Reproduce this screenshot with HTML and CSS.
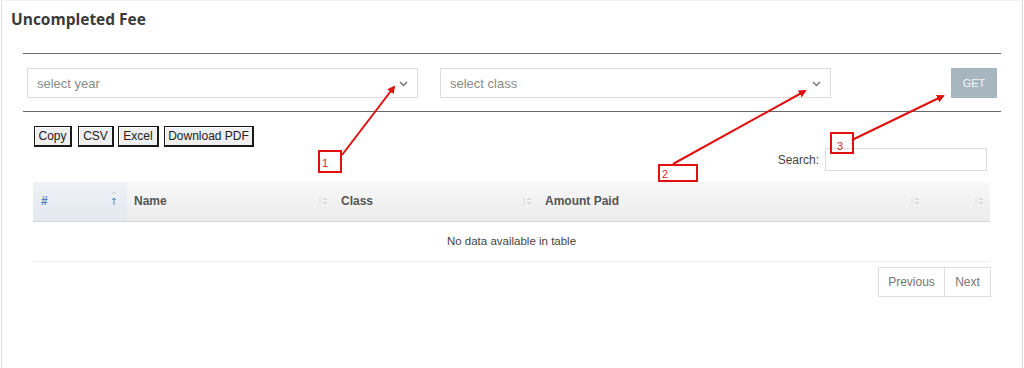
FILE: index.html
```html
<!DOCTYPE html>
<html>
<head>
<meta charset="utf-8">
<link rel="stylesheet" href="styles.css">
</head>
<body>
<div class="page">
  <div class="card">
    <h1 class="title">Uncompleted Fee</h1>
    <div class="content">
      <hr class="rule">
      <div class="filters">
        <div class="select sel-year"><span>select year</span>
          <svg class="chev" width="9" height="6" viewBox="0 0 9 6"><path d="M1 1 L4.5 4.5 L8 1" fill="none" stroke="#777" stroke-width="1.5"/></svg>
        </div>
        <div class="select sel-class"><span>select class</span>
          <svg class="chev" width="9" height="6" viewBox="0 0 9 6"><path d="M1 1 L4.5 4.5 L8 1" fill="none" stroke="#777" stroke-width="1.5"/></svg>
        </div>
        <button class="get">GET</button>
      </div>
      <hr class="rule">
      <div class="dt">
        <div class="dt-buttons">
          <button class="dt-btn b-copy">Copy</button>
          <button class="dt-btn b-csv">CSV</button>
          <button class="dt-btn b-excel">Excel</button>
          <button class="dt-btn b-pdf">Download PDF</button>
        </div>
        <div class="dt-filter">
          <label class="search-label">Search:</label>
          <input class="search-input" type="text">
        </div>
        <table class="grid">
          <thead>
            <tr>
              <th class="c-num sorted"><div class="th-in"><span class="hash">#</span>
                <svg width="8" height="16" viewBox="0 0 8 16"><path d="M2 4 L4 2 L6 4" fill="none" stroke="#c8ccd2" stroke-width="1"/><path d="M4 8 V15 M2.2 10 L4 8 L5.8 10" fill="none" stroke="#5b86c0" stroke-width="1"/></svg></div></th>
              <th class="c-name"><div class="th-in"><span>Name</span>
                <svg width="10" height="12" viewBox="0 0 10 12"><path d="M2 3 V10" stroke="#dcdcdc" stroke-width="1"/><path d="M4.5 5 L7 2.5 L9.5 5 Z M4.5 7 L7 9.5 L9.5 7 Z" fill="#d5d5d5"/></svg></div></th>
              <th class="c-class"><div class="th-in"><span>Class</span>
                <svg width="10" height="12" viewBox="0 0 10 12"><path d="M2 3 V10" stroke="#dcdcdc" stroke-width="1"/><path d="M4.5 5 L7 2.5 L9.5 5 Z M4.5 7 L7 9.5 L9.5 7 Z" fill="#d5d5d5"/></svg></div></th>
              <th class="c-amount"><div class="th-in"><span>Amount Paid</span>
                <svg width="10" height="12" viewBox="0 0 10 12"><path d="M2 3 V10" stroke="#dcdcdc" stroke-width="1"/><path d="M4.5 5 L7 2.5 L9.5 5 Z M4.5 7 L7 9.5 L9.5 7 Z" fill="#d5d5d5"/></svg></div></th>
              <th class="c-last"><div class="th-in"><span></span>
                <svg width="10" height="12" viewBox="0 0 10 12"><path d="M2 3 V10" stroke="#dcdcdc" stroke-width="1"/><path d="M4.5 5 L7 2.5 L9.5 5 Z M4.5 7 L7 9.5 L9.5 7 Z" fill="#d5d5d5"/></svg></div></th>
            </tr>
          </thead>
          <tbody>
            <tr><td class="empty" colspan="5">No data available in table</td></tr>
          </tbody>
        </table>
        <div class="dt-pager">
          <span class="pg">Previous</span><span class="pg">Next</span>
        </div>
      </div>
    </div>
  </div>
  <svg class="annot" width="1024" height="368" viewBox="0 0 1024 368">
    <defs>
      <marker id="ah" markerWidth="8" markerHeight="8" refX="6" refY="4" orient="auto" markerUnits="userSpaceOnUse">
        <path d="M0 0 L8 4 L0 8 Z" fill="#e01010"/>
      </marker>
    </defs>
    <g stroke="#e01010" stroke-width="2" fill="none">
      <line x1="342" y1="155" x2="394" y2="87" marker-end="url(#ah)"/>
      <rect x="319" y="151" width="22" height="21"/>
      <line x1="673" y1="164" x2="805" y2="91" marker-end="url(#ah)"/>
      <rect x="659" y="165" width="38" height="16"/>
      <line x1="852" y1="140" x2="943" y2="96" marker-end="url(#ah)"/>
      <rect x="831" y="133" width="22" height="20"/>
    </g>
    <g fill="#d02828" font-family="'Liberation Sans', Arial, sans-serif" font-size="11">
      <text x="322" y="167">1</text>
      <text x="662" y="178">2</text>
      <text x="837" y="150">3</text>
    </g>
  </svg>
</div>
</body>
</html>
```

FILE: styles.css
```css
* { box-sizing: border-box; }
html, body { margin: 0; padding: 0; background: #fff; }
body { font-family: "Liberation Sans", Arial, sans-serif; }

.page {
  position: relative;
  width: 1024px;
  height: 368px;
  overflow: hidden;
}

.card {
  margin-left: 1px;
  width: 1022px;
  height: 368px;
  border-left: 1px solid #e2e2e2;
  border-right: 1px solid #d8d8d8;
  border-top: 1px solid #f0f0f0;
}

.title {
  margin: 0;
  padding: 7px 9px 0;
  font-family: "Open Sans", sans-serif;
  font-weight: 700;
  font-size: 15.5px;
  line-height: 22px;
  color: #3a3a3a;
}

.content {
  padding: 23px 21px 0;
}

.rule {
  margin: 0;
  border: 0;
  border-top: 1px solid #6a6a6a;
  height: 0;
}

.filters {
  display: flex;
  align-items: center;
  padding: 14px 4px 13px;
}

.select {
  height: 30px;
  border: 1px solid #dcdcdc;
  display: flex;
  align-items: center;
  justify-content: space-between;
  padding: 0 9px 0 9px;
  font-size: 13px;
  color: #8a8a8a;
}
.sel-year { width: 391px; }
.sel-class { width: 391px; margin-left: 22px; }
.chev { margin-top: 1px; }

.get {
  margin-left: auto;
  width: 46px;
  height: 30px;
  border: 0;
  background: #a8b6c0;
  color: #f4f6f8;
  font-family: "Liberation Sans", Arial, sans-serif;
  font-size: 11px;
  padding: 0;
}

.dt {
  padding: 14px 10px 0;
}

.dt-buttons {
  display: flex;
  padding-left: 1px;
}
.dt-btn {
  height: 21px;
  padding: 0;
  font-family: "Liberation Sans", Arial, sans-serif;
  font-size: 12px;
  color: #222;
  background: #efefef;
  border: 1px solid #1a1a1a;
  border-right-width: 2px;
  border-bottom-width: 2px;
  box-shadow: inset 1px 1px 0 #fff;
  line-height: 17px;
  text-align: center;
}
.b-copy { width: 38px; }
.b-csv { width: 36px; margin-left: 6px; }
.b-excel { width: 41px; margin-left: 4px; }
.b-pdf { width: 90px; margin-left: 5px; }

.dt-filter {
  display: flex;
  justify-content: flex-end;
  align-items: center;
  margin-top: 1px;
  padding-right: 4px;
}
.search-label {
  font-size: 12px;
  color: #444;
  margin-right: 6px;
}
.search-input {
  width: 162px;
  height: 23px;
  border: 1px solid #dcdcdc;
  margin: 0;
}

.grid {
  margin-top: 11px;
  width: 957px;
  border-collapse: collapse;
  table-layout: fixed;
  font-size: 12px;
}
.grid th {
  height: 39px;
  padding: 0 5px 0 7px;
  background: linear-gradient(#f8f8f8, #ececec);
  border-bottom: 1px solid #d4d4d4;
  text-align: left;
  font-weight: 700;
  color: #555;
}
.grid th.sorted {
  background: linear-gradient(#eef2f7, #e4e9f0);
  padding-left: 8px;
}
.th-in {
  display: flex;
  justify-content: space-between;
  align-items: center;
}
.hash { color: #4f7fc0; }
.c-num { width: 94px; }
.c-name { width: 207px; }
.c-class { width: 204px; }
.c-amount { width: 388px; }
.c-last { width: 64px; }
.c-num .th-in svg { margin-top: -6px; margin-right: 4px; }
.c-name .th-in svg, .c-class .th-in svg, .c-amount .th-in svg, .c-last .th-in svg { margin-right: 1px; }

.grid td.empty {
  height: 40px;
  text-align: center;
  font-size: 11.5px;
  color: #444;
  border-bottom: 1px solid #eeeeee;
}

.dt-pager {
  display: flex;
  justify-content: flex-end;
  margin-top: 5px;
}
.pg {
  height: 30px;
  line-height: 28px;
  border: 1px solid #dedede;
  font-size: 12px;
  color: #777;
  padding: 0 10px;
}
.pg + .pg { border-left: 0; }
.pg:first-child { width: 67px; text-align: center; padding: 0; }
.pg:last-child { width: 46px; text-align: center; padding: 0; }

.annot {
  position: absolute;
  top: 0;
  left: 0;
  pointer-events: none;
}
```
